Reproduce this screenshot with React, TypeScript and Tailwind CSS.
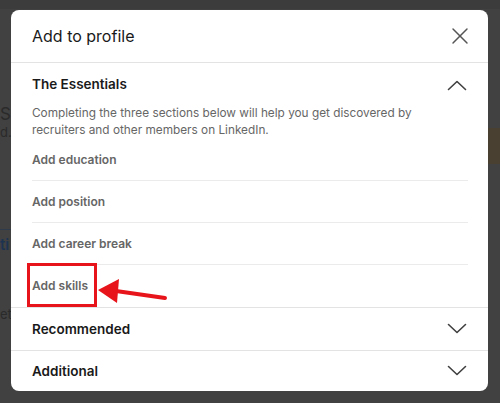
import { X } from 'lucide-react';

const font = { fontFamily: 'Inter, "Noto Sans", "Liberation Sans", sans-serif' };

function Chevron({ up = false }: { up?: boolean }) {
  return (
    <svg width="20" height="12" viewBox="0 0 20 12" fill="none" className="text-[#404040]">
      <path
        d={up ? 'M1.5 10.5 L10 2.5 L18.5 10.5' : 'M1.5 1.5 L10 9.5 L18.5 1.5'}
        stroke="currentColor"
        strokeWidth="1.6"
        strokeLinecap="round"
        strokeLinejoin="round"
      />
    </svg>
  );
}

const items = ['Add education', 'Add position', 'Add career break', 'Add skills'];

export default function App() {
  return (
    <div className="relative w-[500px] h-[403px] overflow-hidden bg-[#414141] pt-[10px] pl-[11px]" style={font}>
      {/* page behind the overlay */}
      <div className="absolute top-0 left-0 w-full h-[9px] bg-[#3c3c3c]" />
      <span className="absolute left-0 top-[102px] text-[17px] text-[#2a2a2a]">S</span>
      <span className="absolute left-0 top-[123px] text-[13px] text-[#2a2a2a]">d.</span>
      <div className="absolute left-0 top-[229px] w-[11px] h-px bg-[#2f3a4a]" />
      <span className="absolute left-0 top-[234px] text-[15px] font-semibold text-[#1e3350]">ti</span>
      <span className="absolute left-0 top-[305px] text-[13px] text-[#2a2a2a]">et</span>
      <div className="absolute right-0 top-[128px] w-[12px] h-[36px] bg-[#4a4032]" />

      <div className="relative w-[477px] h-[381px] rounded-lg bg-white overflow-hidden">
        {/* header */}
        <div className="flex items-center justify-between h-[53px] pl-[21px] pr-[14px] border-b border-[#e3e3e3]">
          <h2 className="text-[16px] text-[#1a1a1a]">Add to profile</h2>
          <X size={28} strokeWidth={1.25} className="text-[#555]" />
        </div>

        {/* essentials */}
        <div className="border-b border-[#e3e3e3]">
          <div className="flex items-center justify-between h-[43px] pl-[21px] pr-[21px]">
            <span className="text-[13.5px] font-semibold text-[#1a1a1a]">The Essentials</span>
            <Chevron up />
          </div>
          <p className="px-[21px] text-[11.8px] leading-[17px] text-[#666] mt-[-1px]">
            Completing the three sections below will help you get discovered by recruiters and other members on LinkedIn.
          </p>
          <ul className="pl-[21px] pr-[20px]">
            {items.map((item, i) => (
              <li
                key={item}
                className={`relative flex items-center h-[42px] text-[12px] font-semibold text-[#666] ${i < items.length - 1 ? 'border-b border-[#ebebeb]' : ''}`}
              >
                {item}
                {item === 'Add skills' && (
                  <>
                    <div className="absolute left-[-5px] top-[-2px] w-[70px] h-[44px] border-[3px] border-[#e8141b]" />
                    <svg className="absolute left-[64px] top-[11px]" width="72" height="30" viewBox="0 0 72 30">
                      <path d="M20 15 L69 22" stroke="#e8141b" strokeWidth="4" strokeLinecap="round" />
                      <path d="M2 14 L23 3 L21 27 Z" fill="#e8141b" strokeLinejoin="round" />
                    </svg>
                  </>
                )}
              </li>
            ))}
          </ul>
        </div>

        {/* collapsed sections */}
        <div className="flex items-center justify-between h-[43px] pl-[21px] pr-[21px] border-b border-[#e3e3e3]">
          <span className="text-[13.5px] font-semibold text-[#1a1a1a]">Recommended</span>
          <Chevron />
        </div>
        <div className="flex items-center justify-between h-[40px] pl-[21px] pr-[21px]">
          <span className="text-[13.5px] font-semibold text-[#1a1a1a]">Additional</span>
          <Chevron />
        </div>
      </div>
    </div>
  );
}
